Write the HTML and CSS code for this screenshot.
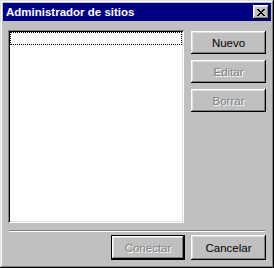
FILE: index.html
```html
<!DOCTYPE html>
<html>
  <head>
    <meta charset="UTF-8" />
    <title>Administrador de sitios</title>
    <link rel="stylesheet" href="styles.css">
  </head>
  <body>
    <div class="window">
      <div class="titlebar">
        <span class="title">Administrador de sitios</span>
        <button class="close" aria-label="Cerrar">
          <svg width="8" height="7" viewBox="0 0 8 7">
            <path d="M0 0h2v1h-2zM6 0h2v1h-2zM1 1h2v1h-2zM5 1h2v1h-2zM2 2h4v1h-4zM3 3h2v1h-2zM2 4h4v1h-4zM1 5h2v1h-2zM5 5h2v1h-2zM0 6h2v1h-2zM6 6h2v1h-2z" fill="#000"/>
          </svg>
        </button>
      </div>

      <div class="content">
        <div class="main">
          <div class="sitelist">
            <div class="row focused"></div>
          </div>
          <div class="side">
            <button class="btn">Nuevo</button>
            <button class="btn" disabled>Editar</button>
            <button class="btn" disabled>Borrar</button>
          </div>
        </div>

        <div class="separator"></div>

        <div class="footer">
          <button class="btn default" disabled>Conectar</button>
          <button class="btn">Cancelar</button>
        </div>
      </div>
    </div>
  </body>
</html>
```

FILE: styles.css
```css
body {
  margin: 0;
  background: #c0c0c0;
  font-family: "Liberation Sans", Arial, sans-serif;
  font-size: 11px;
}
.window {
  width: 274px;
  height: 268px;
  box-sizing: border-box;
  padding: 3px;
  background: #c0c0c0;
  box-shadow: inset -1px -1px #000, inset 1px 1px #dfdfdf,
    inset -2px -2px #808080, inset 2px 2px #fff;
  display: flex;
  flex-direction: column;
}
.titlebar {
  height: 18px;
  background: #000080;
  display: flex;
  align-items: center;
  justify-content: space-between;
  padding: 0 2px 0 3px;
}
.title {
  color: #fff;
  font-weight: bold;
  font-size: 11.5px;
}
.close {
  width: 16px;
  height: 14px;
  padding: 0;
  border: none;
  background: #c0c0c0;
  box-shadow: inset -1px -1px #000, inset 1px 1px #fff,
    inset -2px -2px #808080, inset 2px 2px #dfdfdf;
  display: flex;
  align-items: center;
  justify-content: center;
}
.close svg {
  display: block;
  margin-left: -1px;
}

/* -----------------body-------------- */
.content {
  flex: 1;
  padding: 9px 5px 0 5px;
  display: flex;
  flex-direction: column;
}
.main {
  display: flex;
  gap: 7px;
}
.sitelist {
  width: 176px;
  height: 193px;
  box-sizing: border-box;
  padding: 2px;
  background: #fff;
  box-shadow: inset 1px 1px #808080, inset -1px -1px #fff,
    inset 2px 2px #000, inset -2px -2px #dfdfdf;
}
.row {
  height: 13px;
}
.row.focused {
  box-sizing: border-box;
  border: 1px dotted #000;
}
.side {
  display: flex;
  flex-direction: column;
  gap: 6px;
  margin-top: 1px;
}
.btn {
  width: 75px;
  height: 23px;
  padding: 0;
  border: none;
  background: #c0c0c0;
  font-family: "Liberation Sans", Arial, sans-serif;
  font-size: 11.5px;
  color: #000;
  box-shadow: inset -1px -1px #000, inset 1px 1px #fff,
    inset -2px -2px #808080, inset 2px 2px #dfdfdf;
}
.btn:disabled {
  color: #808080;
  text-shadow: 1px 1px #fff;
}
.btn.default {
  box-shadow: inset 0 0 0 1px #000, inset -2px -2px #000, inset 2px 2px #fff,
    inset -3px -3px #808080, inset 3px 3px #dfdfdf;
}
.separator {
  margin: 7px 1px 0 1px;
  border-top: 1px solid #808080;
  border-bottom: 1px solid #fff;
}
.footer {
  display: flex;
  justify-content: flex-end;
  gap: 6px;
  margin-top: 3px;
}
.footer .btn {
  height: 25px;
}
.footer .default {
  width: 74px;
}
```
